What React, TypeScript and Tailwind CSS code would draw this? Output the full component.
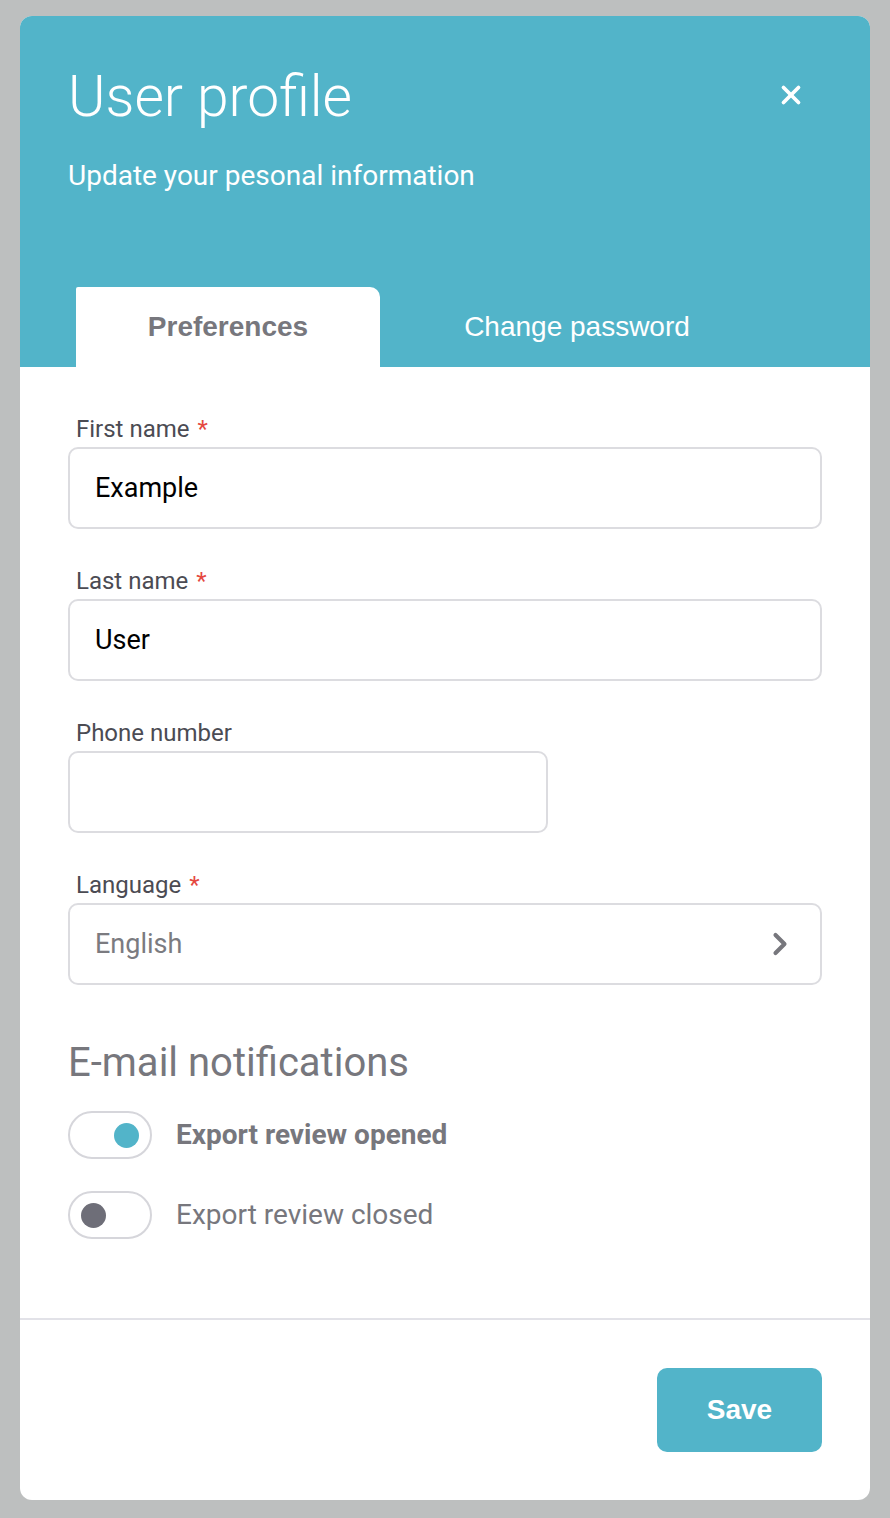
import { X, ChevronRight } from "lucide-react";

const fields = [
  { label: "First name", value: "Example", required: true, wide: true },
  { label: "Last name", value: "User", required: true, wide: true },
  { label: "Phone number", value: "", required: false, wide: false },
];

function Toggle({ on }: { on: boolean }) {
  return (
    <div className={`w-[84px] h-[48px] rounded-full border-2 border-[#d6d6db] bg-white flex items-center px-[11px] ${on ? "justify-end" : "justify-start"}`}>
      <div className={`w-[25px] h-[25px] rounded-full ${on ? "bg-[#52b4c9]" : "bg-[#6e6e78]"}`} />
    </div>
  );
}

export default function App() {
  return (
    <div className="w-full min-h-[1518px] bg-[#bdbfbf] pt-[16px] px-[20px] pb-[18px] font-['Roboto',sans-serif]">
      <div className="w-[850px] h-[1484px] bg-white rounded-[12px] overflow-hidden flex flex-col">

        {/* header */}
        <div className="bg-[#52b4c9] h-[351px] flex flex-col px-[48px] relative">
          <div className="flex items-start justify-between pt-[48px]">
            <h1 className="text-white text-[57px] font-light leading-[66px]">User profile</h1>
            <button className="text-white mt-[16px] mr-[16px]">
              <X size={30} strokeWidth={3} />
            </button>
          </div>
          <p className="text-white text-[28px] mt-[29px] leading-[34px]">Update your pesonal information</p>

          {/* tabs */}
          <div className="mt-auto flex ml-[8px] font-['Liberation_Sans',sans-serif]">
            <div className="w-[304px] h-[80px] bg-white rounded-tr-[10px] rounded-tl-[2px] flex items-center justify-center text-[#77777d] text-[28px] font-bold">
              Preferences
            </div>
            <div className="w-[394px] h-[80px] flex items-center justify-center text-white text-[28px]">
              Change password
            </div>
          </div>
        </div>

        {/* form */}
        <div className="flex-1 px-[48px] pt-[48px]">
          <div className="flex flex-col gap-[38px]">
            {fields.map((f, key) => (
              <div key={key} className="flex flex-col">
                <label className="text-[24px] text-[#4b4b53] leading-[28px] pl-[8px] mb-[4px]">
                  {f.label}
                  {f.required && <span className="text-[#e5483f] ml-[8px]">*</span>}
                </label>
                <div className={`${f.wide ? "w-[754px]" : "w-[480px]"} h-[82px] border-2 border-[#dcdce0] rounded-[10px] flex items-center px-[25px] text-[27px] text-black`}>
                  {f.value}
                </div>
              </div>
            ))}

            <div className="flex flex-col">
              <label className="text-[24px] text-[#4b4b53] leading-[28px] pl-[8px] mb-[4px]">
                Language<span className="text-[#e5483f] ml-[8px]">*</span>
              </label>
              <div className="w-[754px] h-[82px] border-2 border-[#dcdce0] rounded-[10px] flex items-center justify-between pl-[25px] pr-[22px] text-[27px] text-[#7b7b80]">
                <span>English</span>
                <ChevronRight size={36} strokeWidth={2.75} className="text-[#77777d]" />
              </div>
            </div>
          </div>

          <h2 className="text-[40px] text-[#77777d] leading-[48px] mt-[54px]">E-mail notifications</h2>

          <div className="flex flex-col gap-[32px] mt-[24px]">
            <div className="flex items-center gap-[24px]">
              <Toggle on />
              <span className="text-[28px] font-bold text-[#77777d]">Export review opened</span>
            </div>
            <div className="flex items-center gap-[24px]">
              <Toggle on={false} />
              <span className="text-[28px] text-[#77777d]">Export review closed</span>
            </div>
          </div>
        </div>

        {/* footer */}
        <div className="border-t-2 border-[#e2e2e8] h-[182px] flex items-start justify-end px-[48px] pt-[48px]">
          <button className="w-[165px] h-[84px] bg-[#52b4c9] rounded-[10px] text-white text-[28px] font-bold font-['Liberation_Sans',sans-serif]">
            Save
          </button>
        </div>
      </div>
    </div>
  );
}
